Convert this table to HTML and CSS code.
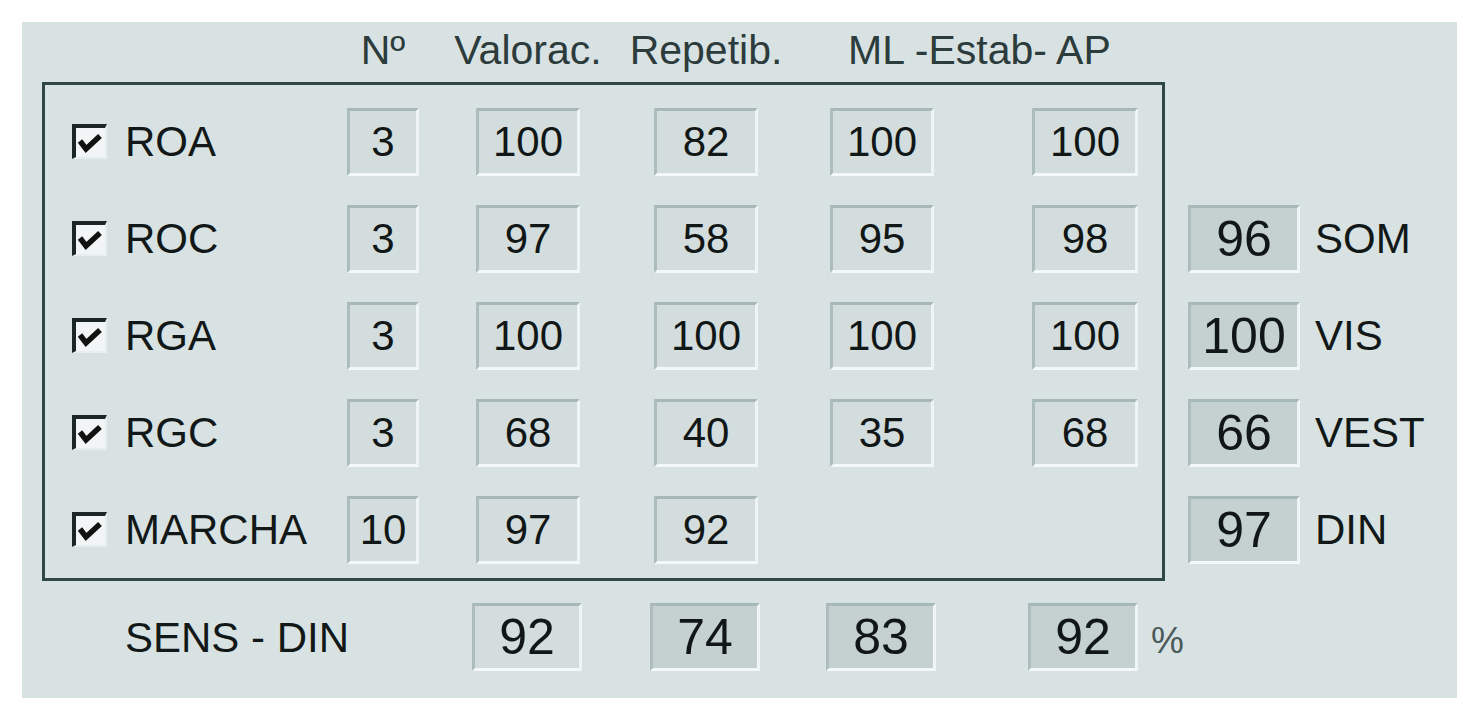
FILE: index.html
```html
<!DOCTYPE html>
<html lang="es">
<head>
<meta charset="utf-8">
<title>Valoración</title>
<link rel="stylesheet" href="styles.css">
</head>
<body>
<div class="page">
  <div class="panel">
    <div class="head grid">
      <span class="hcell c-n">Nº</span>
      <span class="hcell c-val">Valorac.</span>
      <span class="hcell c-rep">Repetib.</span>
      <span class="hcell c-mlap">ML -Estab- AP</span>
    </div>
    <div class="main">
      <div class="frame">
        <div class="row grid">
          <span class="cb"><svg viewBox="0 0 29 29" width="29" height="29"><polyline points="4,13 10,21 24,8" fill="none" stroke="#111" stroke-width="5.5"/></svg></span>
          <span class="label">ROA</span>
          <span class="field f-n">3</span>
          <span class="field f-w">100</span>
          <span class="field f-w">82</span>
          <span class="field f-w">100</span>
          <span class="field f-ap">100</span>
        </div>
        <div class="row grid">
          <span class="cb"><svg viewBox="0 0 29 29" width="29" height="29"><polyline points="4,13 10,21 24,8" fill="none" stroke="#111" stroke-width="5.5"/></svg></span>
          <span class="label">ROC</span>
          <span class="field f-n">3</span>
          <span class="field f-w">97</span>
          <span class="field f-w">58</span>
          <span class="field f-w">95</span>
          <span class="field f-ap">98</span>
        </div>
        <div class="row grid">
          <span class="cb"><svg viewBox="0 0 29 29" width="29" height="29"><polyline points="4,13 10,21 24,8" fill="none" stroke="#111" stroke-width="5.5"/></svg></span>
          <span class="label">RGA</span>
          <span class="field f-n">3</span>
          <span class="field f-w">100</span>
          <span class="field f-w">100</span>
          <span class="field f-w">100</span>
          <span class="field f-ap">100</span>
        </div>
        <div class="row grid">
          <span class="cb"><svg viewBox="0 0 29 29" width="29" height="29"><polyline points="4,13 10,21 24,8" fill="none" stroke="#111" stroke-width="5.5"/></svg></span>
          <span class="label">RGC</span>
          <span class="field f-n">3</span>
          <span class="field f-w">68</span>
          <span class="field f-w">40</span>
          <span class="field f-w">35</span>
          <span class="field f-ap">68</span>
        </div>
        <div class="row grid">
          <span class="cb"><svg viewBox="0 0 29 29" width="29" height="29"><polyline points="4,13 10,21 24,8" fill="none" stroke="#111" stroke-width="5.5"/></svg></span>
          <span class="label">MARCHA</span>
          <span class="field f-n">10</span>
          <span class="field f-w">97</span>
          <span class="field f-w">92</span>
        </div>
      </div>
      <div class="side">
        <div class="srow"><span class="field big dark f-side">96</span><span class="slabel">SOM</span></div>
        <div class="srow"><span class="field big dark f-side">100</span><span class="slabel">VIS</span></div>
        <div class="srow"><span class="field big dark f-side">66</span><span class="slabel">VEST</span></div>
        <div class="srow"><span class="field big dark f-side">97</span><span class="slabel">DIN</span></div>
      </div>
    </div>
    <div class="foot grid">
      <span class="label c-label">SENS - DIN</span>
      <span class="field big f-foot c-val">92</span>
      <span class="field big dark f-foot c-rep">74</span>
      <span class="field big dark f-foot c-ml">83</span>
      <span class="lastcell c-ap"><span class="field big dark f-foot">92</span><span class="pct">%</span></span>
    </div>
  </div>
</div>
</body>
</html>
```

FILE: styles.css
```css
html, body {
  margin: 0;
  padding: 0;
  background: #ffffff;
}

body {
  font-family: "Liberation Sans", Arial, sans-serif;
  color: #141a1a;
}

.page {
  padding: 22px 16px 15px 22px;
}

.panel {
  width: 1435px;
  height: 676px;
  background: #d8e2e2;
  box-sizing: border-box;
}

.grid {
  display: grid;
  grid-template-columns: 53px 222px 129px 178px 176px 202px 106px;
}

/* header */
.head {
  padding: 4px 0 0 50px;
  height: 48px;
  margin-bottom: 8px;
  font-size: 41px;
  line-height: 48px;
  color: #2c3b3b;
}

.hcell {
  display: flex;
  justify-content: center;
  white-space: nowrap;
}

.c-n { grid-column: 3; width: 72px; }
.c-val { grid-column: 4; }
.c-rep { grid-column: 5; }
.c-ml { grid-column: 6; }
.c-ap { grid-column: 7; }
.c-label { grid-column: 2; }

.head .c-val, .head .c-rep { width: 104px; }

.head .c-mlap {
  grid-column: 6 / 8;
  justify-content: flex-start;
  padding-left: 18px;
}

/* main area */
.main {
  display: flex;
  align-items: flex-start;
}

.frame {
  margin-left: 20px;
  border: 3px solid #2f4747;
  padding: 8px 24px 0 27px;
  width: 1123px;
  box-sizing: border-box;
}

.row {
  height: 97px;
  align-items: center;
}

.cb {
  width: 35px;
  height: 35px;
  box-sizing: border-box;
  border-style: solid;
  border-width: 4px 2px 2px 4px;
  border-color: #1d2626 #e6eeee #e6eeee #1d2626;
  background: #f1f5f5;
  display: flex;
  align-items: center;
  justify-content: center;
}

.cb svg {
  display: block;
}

.label {
  font-size: 42px;
  line-height: 48px;
  white-space: nowrap;
  color: #121818;
}

.field {
  height: 68px;
  flex-shrink: 0;
  box-sizing: border-box;
  border-style: solid;
  border-width: 3px;
  border-color: #a7b8b8 #eff5f5 #f3f8f8 #adbdbd;
  background: #d3dddd;
  display: flex;
  align-items: center;
  justify-content: center;
  font-size: 42px;
  color: #111616;
  white-space: nowrap;
}

.field.big {
  font-size: 50px;
}

.field.dark {
  background: #c5d1d1;
}

.f-n { width: 72px; }
.f-w { width: 104px; }
.f-ap { width: 106px; }
.f-side { width: 112px; }
.f-foot { width: 110px; margin-left: -4px; }

/* side column */
.side {
  margin-left: 23px;
  padding-top: 108px;
}

.srow {
  height: 97px;
  display: flex;
  align-items: center;
}

.slabel {
  margin-left: 15px;
  font-size: 42px;
  color: #121818;
}

/* footer */
.foot {
  margin-top: 22px;
  padding-left: 50px;
  height: 68px;
  align-items: center;
}

.foot .label {
  margin-top: 2px;
}

.lastcell {
  display: flex;
  align-items: center;
}

.pct {
  margin-left: 13px;
  font-size: 37px;
  color: #4a5a5a;
  margin-top: 8px;
}
```
